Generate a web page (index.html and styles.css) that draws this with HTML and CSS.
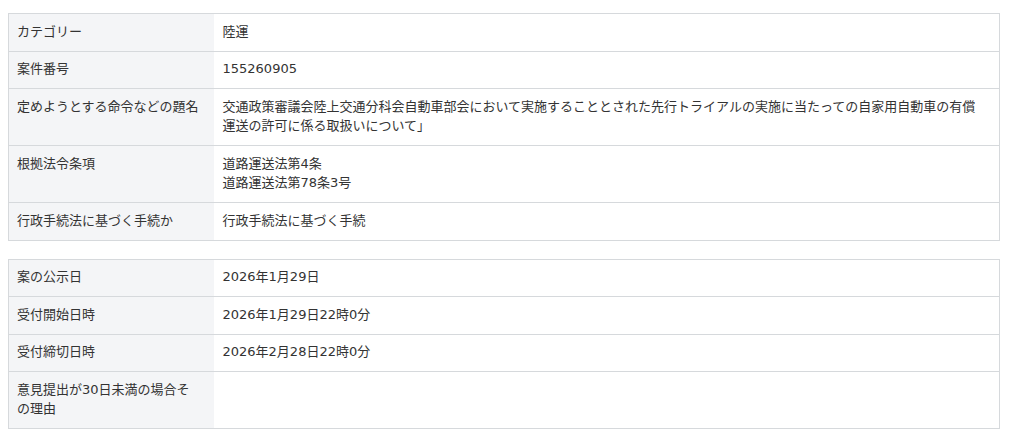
FILE: index.html
```html
<!DOCTYPE html>
<html lang="ja">
<head>
<meta charset="utf-8">
<link rel="stylesheet" href="styles.css">
</head>
<body>
<div class="page">
  <table class="info">
    <tr><th>カテゴリー</th><td>陸運</td></tr>
    <tr><th>案件番号</th><td>155260905</td></tr>
    <tr><th>定めようとする命令などの題名</th><td>交通政策審議会陸上交通分科会自動車部会において実施することとされた先行トライアルの実施に当たっての自家用自動車の有償運送の許可に係る取扱いについて」</td></tr>
    <tr><th>根拠法令条項</th><td>道路運送法第4条<br>道路運送法第78条3号</td></tr>
    <tr><th>行政手続法に基づく手続か</th><td>行政手続法に基づく手続</td></tr>
  </table>
  <table class="info">
    <tr><th>案の公示日</th><td>2026年1月29日</td></tr>
    <tr><th>受付開始日時</th><td>2026年1月29日22時0分</td></tr>
    <tr><th>受付締切日時</th><td>2026年2月28日22時0分</td></tr>
    <tr><th>意見提出が30日未満の場合その理由</th><td></td></tr>
  </table>
</div>
</body>
</html>
```
FILE: styles.css
```css
html, body {
  margin: 0;
  padding: 0;
  background: #ffffff;
}
body {
  font-family: "DejaVu Sans", "Noto Sans CJK JP", sans-serif;
  font-size: 13px;
  color: #333333;
}
.page {
  padding: 13px 24px 0 8px;
  display: flex;
  flex-direction: column;
  gap: 18px;
}
.info {
  width: 992px;
  border-collapse: collapse;
  border: 1px solid #d6d9dc;
}
.info th,
.info td {
  border-top: 1px solid #d6d9dc;
  line-height: 19.5px;
  padding: 7.5px 20px 9.5px 9px;
  text-align: left;
  vertical-align: top;
  font-weight: normal;
}
.info th {
  box-sizing: border-box;
  width: 205px;
  padding-left: 8px;
  padding-right: 13px;
  background: #f4f5f7;
}
.info td {
  background: #ffffff;
}
```
